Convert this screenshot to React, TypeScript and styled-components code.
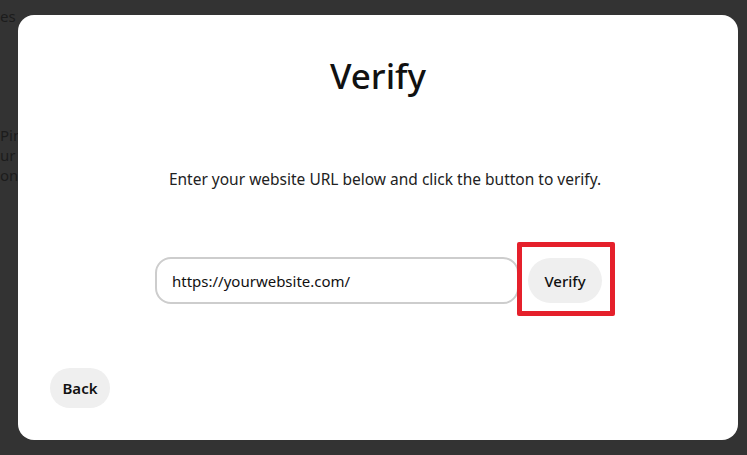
import styled, { createGlobalStyle } from 'styled-components';

const GlobalStyle = createGlobalStyle`
  html, body {
    margin: 0;
    padding: 0;
    background: #333333;
    font-family: 'Noto Sans', 'Open Sans', sans-serif;
    overflow: hidden;
  }
`;

const Backdrop = styled.div`
  position: relative;
  width: 747px;
  height: 455px;
  background: #333333;
  overflow: hidden;
`;

const BehindPage = styled.div`
  display: flex;
  flex-direction: column;
  padding: 6px 0 0 0;
  color: #1c1c1c;
  font-size: 15px;
  line-height: 20px;
`;

const BehindBlock = styled.div<{ $gap?: number }>`
  margin-top: ${({ $gap }) => $gap ?? 0}px;
`;

const Modal = styled.div`
  position: absolute;
  left: 18px;
  top: 15px;
  width: 720px;
  height: 425px;
  box-sizing: border-box;
  background: #ffffff;
  border-radius: 16px;
  padding: 36px 32px 32px;
  display: flex;
  flex-direction: column;
  align-items: center;
`;

const Title = styled.h1`
  margin: 0;
  font-size: 35px;
  font-weight: 500;
  line-height: 50px;
  color: #111111;
`;

const Description = styled.p`
  margin: 68px 0 0 14px;
  font-size: 15.5px;
  line-height: 20px;
  color: #222222;
`;

const Row = styled.div`
  display: flex;
  align-items: flex-start;
  margin-top: 53px;
  margin-left: 14px;
`;

const UrlInput = styled.input`
  width: 364px;
  height: 47px;
  box-sizing: border-box;
  border: 2px solid #cdcdcd;
  border-radius: 16px;
  padding: 0 15px;
  font-family: inherit;
  font-size: 15px;
  color: #111111;
  background: #ffffff;
  margin-top: 15px;
  outline: none;
`;

const Highlight = styled.div`
  margin-left: -2px;
  border: 5px solid #e5202b;
  border-radius: 2px;
  padding: 11px 8px 8px 6px;
  display: flex;
`;

const PillButton = styled.button<{ $w: number; $h: number; $weight?: number }>`
  width: ${({ $w }) => $w}px;
  height: ${({ $h }) => $h}px;
  border: none;
  border-radius: 24px;
  background: #efefef;
  color: #111111;
  font-family: inherit;
  font-size: 15px;
  font-weight: ${({ $weight }) => $weight ?? 500};
  padding: 0;
  cursor: pointer;
`;

const Footer = styled.div`
  margin-top: auto;
  align-self: flex-start;
`;

export default function App() {
  return (
    <>
      <GlobalStyle />
      <Backdrop>
        <BehindPage>
          <BehindBlock>es</BehindBlock>
          <BehindBlock $gap={99}>Pin</BehindBlock>
          <BehindBlock>ur</BehindBlock>
          <BehindBlock>on</BehindBlock>
        </BehindPage>
        <Modal>
          <Title>Verify</Title>
          <Description>
            Enter your website URL below and click the button to verify.
          </Description>
          <Row>
            <UrlInput defaultValue="https://yourwebsite.com/" />
            <Highlight>
              <PillButton $w={74} $h={45}>
                Verify
              </PillButton>
            </Highlight>
          </Row>
          <Footer>
            <PillButton $w={60} $h={40} $weight={600}>
              Back
            </PillButton>
          </Footer>
        </Modal>
      </Backdrop>
    </>
  );
}
